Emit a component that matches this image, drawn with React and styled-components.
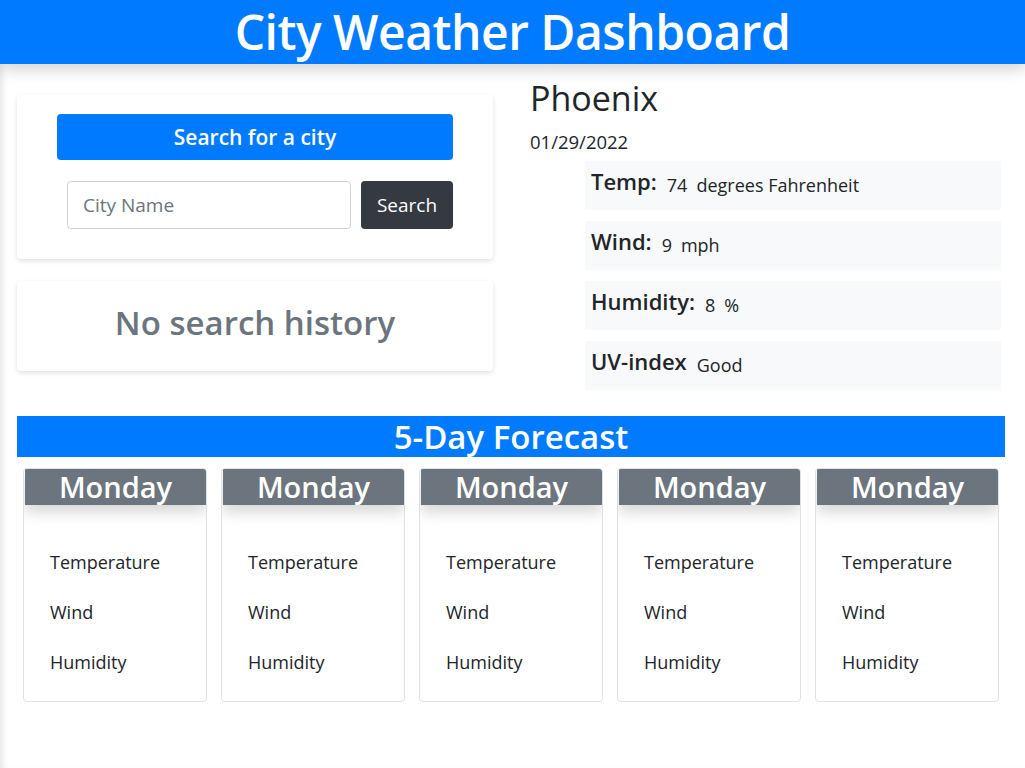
import React from "react";
import styled, { createGlobalStyle } from "styled-components";

const Global = createGlobalStyle`
  html, body { margin: 0; padding: 0; background: #fff; }
  body {
    font-family: "Open Sans", "Noto Sans", "Liberation Sans", sans-serif;
    color: #212529;
  }
  * { box-sizing: border-box; }
`;

const Page = styled.div`
  min-height: 768px;
  box-shadow: inset 6px 0 6px -4px rgba(0,0,0,0.12);
`;

const Header = styled.header`
  height: 64px;
  background: #007bff;
  display: flex;
  align-items: center;
  justify-content: center;
  box-shadow: 0 6px 14px rgba(0,0,0,0.16);
  position: relative;
  z-index: 1;
`;

const Title = styled.h1`
  margin: 0;
  color: #fff;
  font-size: 48px;
  font-weight: 600;
  letter-spacing: -0.5px;
  line-height: 1;
`;

const TopRow = styled.div`
  display: grid;
  grid-template-columns: 476px 1fr;
  column-gap: 37px;
  padding: 14px 24px 0 17px;
`;

const LeftCol = styled.div`
  display: flex;
  flex-direction: column;
  gap: 22px;
  padding-top: 17px;
`;

const Card = styled.div`
  background: #fff;
  border-radius: 4px;
  box-shadow: 0 2px 5px rgba(0,0,0,0.12);
`;

const SearchCard = styled(Card)`
  padding: 19px 40px 30px;
  display: flex;
  flex-direction: column;
  gap: 21px;
`;

const Banner = styled.div`
  height: 46px;
  background: #007bff;
  color: #fff;
  border-radius: 4px;
  display: flex;
  align-items: center;
  justify-content: center;
  font-size: 21px;
  font-weight: 600;
`;

const InputRow = styled.div`
  display: flex;
  gap: 10px;
  padding: 0 0 0 10px;
`;

const Input = styled.input`
  flex: 1;
  height: 48px;
  border: 1px solid #ced4da;
  border-radius: 4px;
  padding: 0 15px;
  font: inherit;
  font-size: 19px;
  color: #495057;
  &::placeholder { color: #6c757d; }
`;

const DarkButton = styled.button`
  width: 92px;
  height: 48px;
  border: none;
  border-radius: 4px;
  background: #343a40;
  color: #fff;
  font: inherit;
  font-size: 19px;
`;

const HistoryCard = styled(Card)`
  height: 90px;
  display: flex;
  align-items: center;
  justify-content: center;
  padding-bottom: 8px;
  color: #6c757d;
  font-size: 33px;
  font-weight: 600;
`;

const RightCol = styled.div`
  display: flex;
  flex-direction: column;
`;

const City = styled.h2`
  margin: 0;
  font-size: 34px;
  font-weight: 500;
  line-height: 1.2;
`;

const DateText = styled.div`
  font-size: 18.5px;
  margin-top: 11px;
  line-height: 1.3;
`;

const Stats = styled.div`
  margin-left: 55px;
  margin-top: 7px;
  display: flex;
  flex-direction: column;
  gap: 11px;
`;

const Stat = styled.div`
  height: 49px;
  background: #f8f9fa;
  display: flex;
  align-items: baseline;
  padding: 5px 6px 0;
`;

const StatLabel = styled.span`
  font-size: 22px;
  font-weight: 600;
  margin-right: 10px;
`;

const StatValue = styled.span`
  font-size: 18px;
  position: relative;
  top: 2px;
  margin-right: ${(p) => (p.$gap ? "9px" : "0")};
`;

const ForecastBar = styled.div`
  margin: 26px 20px 0 17px;
  height: 41px;
  background: #007bff;
  color: #fff;
  display: flex;
  align-items: center;
  justify-content: center;
  font-size: 33px;
  font-weight: 600;
`;

const DayGrid = styled.div`
  display: grid;
  grid-template-columns: repeat(5, 184px);
  gap: 14px;
  padding: 11px 0 0 23px;
`;

const DayCard = styled.div`
  height: 234px;
  border: 1px solid #dee2e6;
  border-radius: 4px;
  overflow: hidden;
`;

const DayHead = styled.div`
  height: 36px;
  background: #6c757d;
  color: #fff;
  display: flex;
  align-items: center;
  justify-content: center;
  font-size: 29px;
  font-weight: 600;
  box-shadow: 0 8px 14px rgba(0,0,0,0.15);
  margin-left: 1px;
`;

const DayBody = styled.div`
  padding: 44px 26px 0;
  display: flex;
  flex-direction: column;
  gap: 24px;
  font-size: 18px;
  line-height: 26px;
`;

const stats = [
  ["Temp:", "74", "degrees Fahrenheit"],
  ["Wind:", "9", "mph"],
  ["Humidity:", "8", "%"],
  ["UV-index", "Good", ""],
];

export default function App() {
  return (
    <Page>
      <Global />
      <Header>
        <Title>City Weather Dashboard</Title>
      </Header>
      <TopRow>
        <LeftCol>
          <SearchCard>
            <Banner>Search for a city</Banner>
            <InputRow>
              <Input placeholder="City Name" />
              <DarkButton>Search</DarkButton>
            </InputRow>
          </SearchCard>
          <HistoryCard>No search history</HistoryCard>
        </LeftCol>
        <RightCol>
          <City>Phoenix</City>
          <DateText>01/29/2022</DateText>
          <Stats>
            {stats.map(([l, v, u]) => (
              <Stat key={l}>
                <StatLabel>{l}</StatLabel>
                <StatValue $gap={!!u}>{v}</StatValue>
                {u && <StatValue>{u}</StatValue>}
              </Stat>
            ))}
          </Stats>
        </RightCol>
      </TopRow>
      <ForecastBar>5-Day Forecast</ForecastBar>
      <DayGrid>
        {[0, 1, 2, 3, 4].map((i) => (
          <DayCard key={i}>
            <DayHead>Monday</DayHead>
            <DayBody>
              <div>Temperature</div>
              <div>Wind</div>
              <div>Humidity</div>
            </DayBody>
          </DayCard>
        ))}
      </DayGrid>
    </Page>
  );
}
